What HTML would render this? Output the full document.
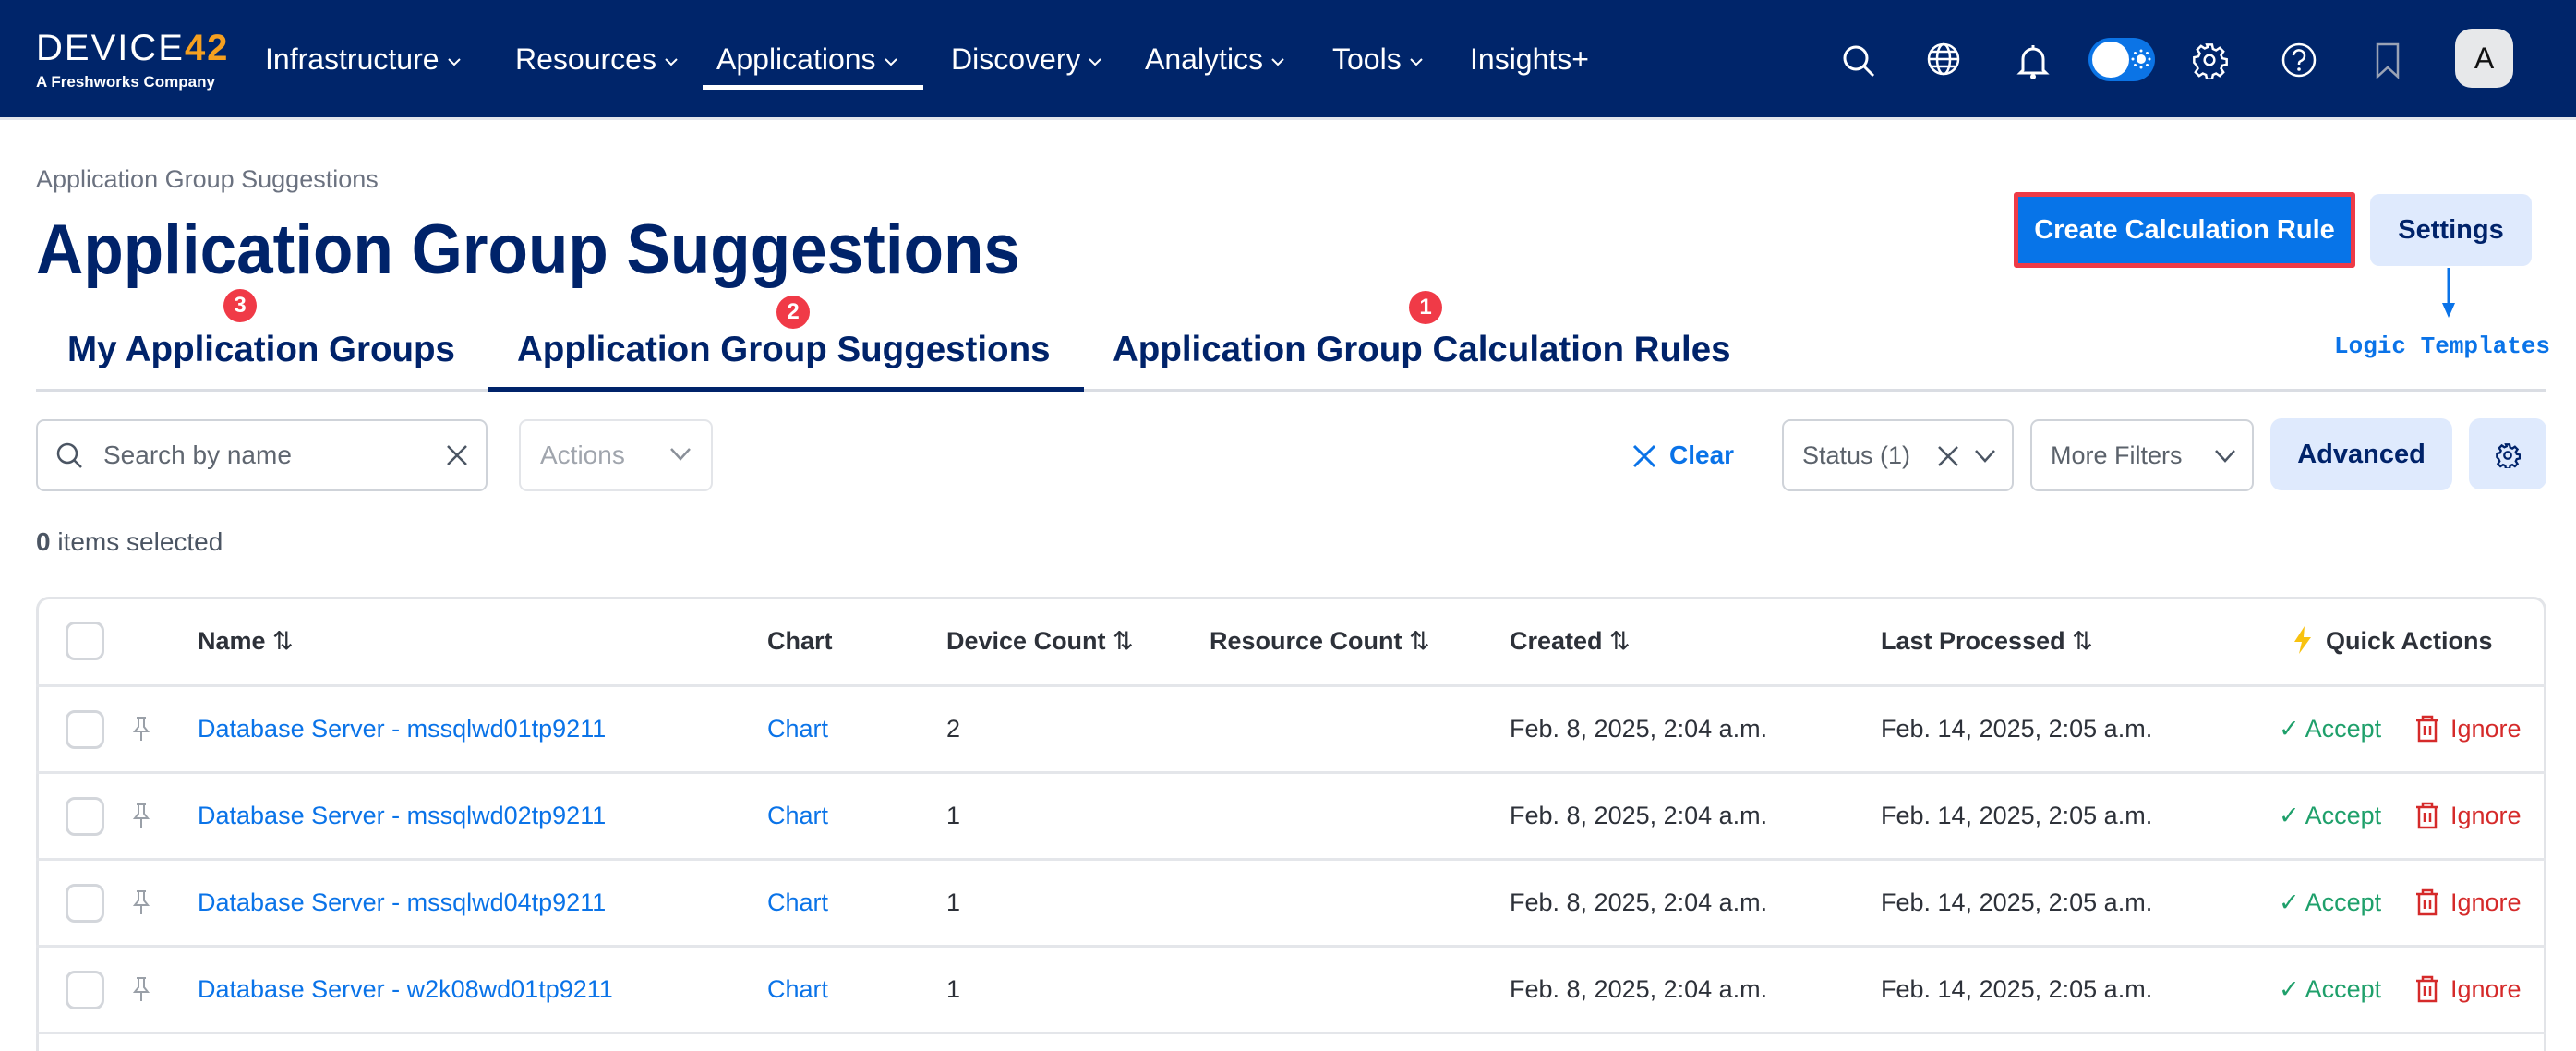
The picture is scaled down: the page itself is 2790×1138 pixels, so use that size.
<!DOCTYPE html>
<html><head><meta charset="utf-8">
<style>
*{margin:0;padding:0;box-sizing:border-box}
html,body{width:2790px;height:1138px;overflow:hidden}
body{background:#fff;font-family:"Liberation Sans",sans-serif;position:relative}
.a{position:absolute;white-space:nowrap}
.nav{position:absolute;left:0;top:0;width:2790px;height:127px;background:#00256a}
.ni{position:absolute;top:44px;font-size:32px;color:#fff;line-height:40px}
.ni svg{vertical-align:middle;margin-left:8px}
.box{position:absolute;border:2px solid #cfd3d9;border-radius:9px;background:#fff}
.cb{position:absolute;left:71px;width:42px;height:42px;border:3px solid #d3d6db;border-radius:10px}
.hd{position:absolute;font-size:27px;font-weight:bold;color:#2d3139;line-height:34px}
.td{position:absolute;font-size:27px;color:#2d3139;line-height:34px}
.lk{color:#0a73e8}
.rl{position:absolute;left:39px;width:2719px;height:3px;background:#e4e6ea}
.tab{position:absolute;top:357px;font-size:38.5px;font-weight:bold;color:#00236a;line-height:44px}
</style></head><body>
<div class="nav"></div>
<div class="a" style="left:39px;top:32px;font-size:40px;color:#fff;letter-spacing:2px;line-height:40px">DEVICE<span style="color:#f5a020;font-weight:bold">42</span></div>
<div class="a" style="left:39px;top:79px;font-size:17px;font-weight:bold;color:#fff;line-height:20px">A Freshworks Company</div>
<div class="ni" style="left:287px">Infrastructure<svg width="16" height="10"><path d="M2 2l6 6 6-6" stroke="#fff" stroke-width="2" fill="none"/></svg></div>
<div class="ni" style="left:558px">Resources<svg width="16" height="10"><path d="M2 2l6 6 6-6" stroke="#fff" stroke-width="2" fill="none"/></svg></div>
<div class="ni" style="left:776px">Applications<svg width="16" height="10"><path d="M2 2l6 6 6-6" stroke="#fff" stroke-width="2" fill="none"/></svg></div>
<div class="a" style="left:761px;top:92px;width:239px;height:5px;background:#fff"></div>
<div class="ni" style="left:1030px">Discovery<svg width="16" height="10"><path d="M2 2l6 6 6-6" stroke="#fff" stroke-width="2" fill="none"/></svg></div>
<div class="ni" style="left:1240px">Analytics<svg width="16" height="10"><path d="M2 2l6 6 6-6" stroke="#fff" stroke-width="2" fill="none"/></svg></div>
<div class="ni" style="left:1443px">Tools<svg width="16" height="10"><path d="M2 2l6 6 6-6" stroke="#fff" stroke-width="2" fill="none"/></svg></div>
<div class="ni" style="left:1592px">Insights+</div>
<svg class="a" style="left:1993px;top:46px" width="40" height="40"><circle cx="17" cy="17" r="12" stroke="#fff" stroke-width="3" fill="none"/><path d="M26 26l10 10" stroke="#fff" stroke-width="3"/></svg>
<svg class="a" style="left:2085px;top:44px" width="40" height="40"><circle cx="20" cy="20" r="16" stroke="#fff" stroke-width="2.5" fill="none"/><ellipse cx="20" cy="20" rx="7" ry="16" stroke="#fff" stroke-width="2.5" fill="none"/><path d="M4 20h32M7 12h26M7 28h26" stroke="#fff" stroke-width="2.5"/></svg>
<svg class="a" style="left:2183px;top:46px" width="38" height="42"><path d="M8 30V18a11 11 0 0 1 22 0v12l3 3H5z" stroke="#fff" stroke-width="3" fill="none"/><circle cx="19" cy="37" r="3" fill="#fff"/><path d="M19 3v4" stroke="#fff" stroke-width="3"/></svg>
<div class="a" style="left:2262px;top:41px;width:72px;height:47px;border-radius:24px;background:#0b74e6"></div>
<div class="a" style="left:2266px;top:45px;width:40px;height:39px;border-radius:20px;background:#fff"></div>
<svg class="a" style="left:2308px;top:53px" width="22" height="22"><circle cx="11" cy="11" r="5" fill="#fff"/><g fill="#fff"><circle cx="11" cy="2" r="1.5"/><circle cx="11" cy="20" r="1.5"/><circle cx="2" cy="11" r="1.5"/><circle cx="20" cy="11" r="1.5"/><circle cx="4.5" cy="4.5" r="1.5"/><circle cx="17.5" cy="17.5" r="1.5"/><circle cx="4.5" cy="17.5" r="1.5"/><circle cx="17.5" cy="4.5" r="1.5"/></g></svg>
<svg class="a" style="left:2373px;top:45px" width="40" height="40" viewBox="0 0 24 24"><path d="M10.3 2h3.4l.6 2.8 2 .9 2.4-1.6 2.4 2.4-1.6 2.4.9 2 2.8.6v3.4l-2.8.6-.9 2 1.6 2.4-2.4 2.4-2.4-1.6-2 .9-.6 2.8h-3.4l-.6-2.8-2-.9-2.4 1.6-2.4-2.4 1.6-2.4-.9-2L2 13.7v-3.4l2.8-.6.9-2-1.6-2.4 2.4-2.4 2.4 1.6 2-.9z" stroke="#fff" stroke-width="1.5" fill="none"/><circle cx="12" cy="12" r="3.2" stroke="#fff" stroke-width="1.5" fill="none"/></svg>
<svg class="a" style="left:2470px;top:45px" width="40" height="40"><circle cx="20" cy="20" r="17" stroke="#fff" stroke-width="2.5" fill="none"/><path d="M14 15a6 6 0 1 1 8 6c-2 1-2 2-2 4" stroke="#fff" stroke-width="2.5" fill="none"/><circle cx="20" cy="30" r="1.8" fill="#fff"/></svg>
<svg class="a" style="left:2570px;top:46px" width="32" height="40"><path d="M5 2h22v35l-11-10L5 37z" stroke="#9aa3b5" stroke-width="2.5" fill="none"/></svg>
<div class="a" style="left:2659px;top:31px;width:63px;height:64px;border-radius:18px;background:#e7e8ea;color:#111;font-size:32px;text-align:center;line-height:64px">A</div>
<div class="a" style="left:0;top:127px;width:2790px;height:3px;background:#e3e6ec"></div>

<div class="a" style="left:39px;top:178px;font-size:27px;color:#6b7280;line-height:32px">Application Group Suggestions</div>
<div class="a" style="left:39px;top:226px;font-size:76px;font-weight:bold;color:#00236a;line-height:90px;transform:scaleX(.935);transform-origin:left">Application Group Suggestions</div>

<div class="tab" style="left:73px">My Application Groups</div>
<div class="tab" style="left:560px">Application Group Suggestions</div>
<div class="tab" style="left:1205px">Application Group Calculation Rules</div>
<div class="a" style="left:39px;top:421px;width:2719px;height:3px;background:#dadde3"></div>
<div class="a" style="left:528px;top:419px;width:646px;height:5px;background:#00236a"></div>
<div class="a" style="left:242px;top:313px;width:36px;height:36px;border-radius:18px;background:#f03a47;color:#fff;font-weight:bold;font-size:24px;text-align:center;line-height:36px">3</div>
<div class="a" style="left:841px;top:320px;width:36px;height:36px;border-radius:18px;background:#f03a47;color:#fff;font-weight:bold;font-size:24px;text-align:center;line-height:36px">2</div>
<div class="a" style="left:1526px;top:315px;width:36px;height:36px;border-radius:18px;background:#f03a47;color:#fff;font-weight:bold;font-size:24px;text-align:center;line-height:36px">1</div>

<div class="a" style="left:2181px;top:208px;width:370px;height:82px;background:#0774e8;border:5px solid #ee3b47;border-radius:3px;color:#fff;font-size:29px;font-weight:bold;text-align:center;line-height:72px">Create Calculation Rule</div>
<div class="a" style="left:2567px;top:210px;width:175px;height:78px;background:#dfeafd;border-radius:10px;color:#00236a;font-size:29px;font-weight:bold;text-align:center;line-height:78px">Settings</div>
<svg class="a" style="left:2642px;top:290px" width="20" height="56"><path d="M10 0v40" stroke="#0a73e8" stroke-width="3"/><path d="M3 38l7 16 7-16z" fill="#0a73e8"/></svg>
<div class="a" style="left:2528px;top:360px;font-family:'Liberation Mono',monospace;font-weight:bold;font-size:26px;color:#0a73e8;line-height:30px">Logic Templates</div>

<div class="box" style="left:39px;top:454px;width:489px;height:78px"></div>
<svg class="a" style="left:60px;top:478px" width="30" height="32"><circle cx="13" cy="13" r="10" stroke="#4b5563" stroke-width="2.5" fill="none"/><path d="M20 20l8 8" stroke="#4b5563" stroke-width="2.5"/></svg>
<div class="a" style="left:112px;top:477px;font-size:28px;color:#5f6670;line-height:32px">Search by name</div>
<svg class="a" style="left:483px;top:481px" width="24" height="24"><path d="M2 2l20 20M22 2L2 22" stroke="#4b5563" stroke-width="2.5"/></svg>
<div class="box" style="left:562px;top:454px;width:210px;height:78px;border-color:#e3e5e9"></div>
<div class="a" style="left:585px;top:477px;font-size:28px;color:#a0a5ad;line-height:32px">Actions</div>
<svg class="a" style="left:725px;top:484px" width="24" height="16"><path d="M2 2l10 11 10-11" stroke="#8a9099" stroke-width="2.5" fill="none"/></svg>

<svg class="a" style="left:1768px;top:481px" width="26" height="26"><path d="M2 2l22 22M24 2L2 24" stroke="#0a73e8" stroke-width="3"/></svg>
<div class="a" style="left:1808px;top:477px;font-size:28px;font-weight:bold;color:#0a73e8;line-height:32px">Clear</div>
<div class="box" style="left:1930px;top:454px;width:251px;height:78px"></div>
<div class="a" style="left:1952px;top:477px;font-size:27px;color:#5b626b;line-height:32px">Status (1)</div>
<svg class="a" style="left:2098px;top:482px" width="24" height="24"><path d="M2 2l20 20M22 2L2 22" stroke="#4b5563" stroke-width="2.5"/></svg>
<svg class="a" style="left:2138px;top:486px" width="24" height="16"><path d="M2 2l10 11 10-11" stroke="#4b5563" stroke-width="2.5" fill="none"/></svg>
<div class="box" style="left:2199px;top:454px;width:242px;height:78px"></div>
<div class="a" style="left:2221px;top:477px;font-size:27px;color:#5b626b;line-height:32px">More Filters</div>
<svg class="a" style="left:2398px;top:486px" width="24" height="16"><path d="M2 2l10 11 10-11" stroke="#4b5563" stroke-width="2.5" fill="none"/></svg>
<div class="a" style="left:2459px;top:453px;width:197px;height:78px;background:#dfeafd;border-radius:12px;color:#00236a;font-size:29px;font-weight:bold;text-align:center;line-height:78px">Advanced</div>
<div class="a" style="left:2674px;top:453px;width:84px;height:77px;background:#dfeafd;border-radius:12px"></div>
<svg class="a" style="left:2702px;top:479px" width="28" height="28" viewBox="0 0 24 24"><path d="M10.3 2h3.4l.6 2.8 2 .9 2.4-1.6 2.4 2.4-1.6 2.4.9 2 2.8.6v3.4l-2.8.6-.9 2 1.6 2.4-2.4 2.4-2.4-1.6-2 .9-.6 2.8h-3.4l-.6-2.8-2-.9-2.4 1.6-2.4-2.4 1.6-2.4-.9-2L2 13.7v-3.4l2.8-.6.9-2-1.6-2.4 2.4-2.4 2.4 1.6 2-.9z" stroke="#00236a" stroke-width="2" fill="none"/><circle cx="12" cy="12" r="3.2" stroke="#00236a" stroke-width="2" fill="none"/></svg>

<div class="a" style="left:39px;top:571px;font-size:28px;color:#4b5563;line-height:32px"><b>0</b> items selected</div>

<div class="a" style="left:39px;top:646px;width:2719px;height:492px;border:3px solid #e2e4e8;border-bottom:none;border-radius:14px 14px 0 0"></div>
<div class="rl" style="top:741px"></div>
<div class="rl" style="top:835px"></div>
<div class="rl" style="top:929px"></div>
<div class="rl" style="top:1023px"></div>
<div class="rl" style="top:1117px"></div>

<div class="cb" style="top:673px"></div>
<div class="hd" style="left:214px;top:677px">Name <span style="font-weight:normal">⇅</span></div>
<div class="hd" style="left:831px;top:677px">Chart</div>
<div class="hd" style="left:1025px;top:677px">Device Count <span style="font-weight:normal">⇅</span></div>
<div class="hd" style="left:1310px;top:677px">Resource Count <span style="font-weight:normal">⇅</span></div>
<div class="hd" style="left:1635px;top:677px">Created <span style="font-weight:normal">⇅</span></div>
<div class="hd" style="left:2037px;top:677px">Last Processed <span style="font-weight:normal">⇅</span></div>
<svg class="a" style="left:2482px;top:677px" width="24" height="32"><path d="M14 1L3 18h8l-3 13L21 13h-8z" fill="#f8c20f"/></svg>
<div class="hd" style="left:2519px;top:677px">Quick Actions</div>

<div class="cb" style="top:769px"></div>
<svg class="a" style="left:143px;top:775px" width="20" height="28"><path d="M5 2h10M7 2v10l-4 5h14l-4-5V2M10 17v10" stroke="#9aa0a8" stroke-width="2" fill="none"/></svg>
<div class="td lk" style="left:214px;top:772px">Database Server - mssqlwd01tp9211</div>
<div class="td lk" style="left:831px;top:772px">Chart</div>
<div class="td" style="left:1025px;top:772px">2</div>
<div class="td" style="left:1635px;top:772px">Feb. 8, 2025, 2:04 a.m.</div>
<div class="td" style="left:2037px;top:772px">Feb. 14, 2025, 2:05 a.m.</div>
<div class="td" style="left:2468px;top:772px;color:#1fa06b">✓ Accept</div>
<svg class="a" style="left:2615px;top:774px" width="28" height="30"><path d="M2 6h24M9 6V2h10v4M5 6v22h18V6M11 12v10M17 12v10" stroke="#d52a2a" stroke-width="2.5" fill="none"/></svg>
<div class="td" style="left:2654px;top:772px;color:#d52a2a">Ignore</div>

<div class="cb" style="top:863px"></div>
<svg class="a" style="left:143px;top:869px" width="20" height="28"><path d="M5 2h10M7 2v10l-4 5h14l-4-5V2M10 17v10" stroke="#9aa0a8" stroke-width="2" fill="none"/></svg>
<div class="td lk" style="left:214px;top:866px">Database Server - mssqlwd02tp9211</div>
<div class="td lk" style="left:831px;top:866px">Chart</div>
<div class="td" style="left:1025px;top:866px">1</div>
<div class="td" style="left:1635px;top:866px">Feb. 8, 2025, 2:04 a.m.</div>
<div class="td" style="left:2037px;top:866px">Feb. 14, 2025, 2:05 a.m.</div>
<div class="td" style="left:2468px;top:866px;color:#1fa06b">✓ Accept</div>
<svg class="a" style="left:2615px;top:868px" width="28" height="30"><path d="M2 6h24M9 6V2h10v4M5 6v22h18V6M11 12v10M17 12v10" stroke="#d52a2a" stroke-width="2.5" fill="none"/></svg>
<div class="td" style="left:2654px;top:866px;color:#d52a2a">Ignore</div>

<div class="cb" style="top:957px"></div>
<svg class="a" style="left:143px;top:963px" width="20" height="28"><path d="M5 2h10M7 2v10l-4 5h14l-4-5V2M10 17v10" stroke="#9aa0a8" stroke-width="2" fill="none"/></svg>
<div class="td lk" style="left:214px;top:960px">Database Server - mssqlwd04tp9211</div>
<div class="td lk" style="left:831px;top:960px">Chart</div>
<div class="td" style="left:1025px;top:960px">1</div>
<div class="td" style="left:1635px;top:960px">Feb. 8, 2025, 2:04 a.m.</div>
<div class="td" style="left:2037px;top:960px">Feb. 14, 2025, 2:05 a.m.</div>
<div class="td" style="left:2468px;top:960px;color:#1fa06b">✓ Accept</div>
<svg class="a" style="left:2615px;top:962px" width="28" height="30"><path d="M2 6h24M9 6V2h10v4M5 6v22h18V6M11 12v10M17 12v10" stroke="#d52a2a" stroke-width="2.5" fill="none"/></svg>
<div class="td" style="left:2654px;top:960px;color:#d52a2a">Ignore</div>

<div class="cb" style="top:1051px"></div>
<svg class="a" style="left:143px;top:1057px" width="20" height="28"><path d="M5 2h10M7 2v10l-4 5h14l-4-5V2M10 17v10" stroke="#9aa0a8" stroke-width="2" fill="none"/></svg>
<div class="td lk" style="left:214px;top:1054px">Database Server - w2k08wd01tp9211</div>
<div class="td lk" style="left:831px;top:1054px">Chart</div>
<div class="td" style="left:1025px;top:1054px">1</div>
<div class="td" style="left:1635px;top:1054px">Feb. 8, 2025, 2:04 a.m.</div>
<div class="td" style="left:2037px;top:1054px">Feb. 14, 2025, 2:05 a.m.</div>
<div class="td" style="left:2468px;top:1054px;color:#1fa06b">✓ Accept</div>
<svg class="a" style="left:2615px;top:1056px" width="28" height="30"><path d="M2 6h24M9 6V2h10v4M5 6v22h18V6M11 12v10M17 12v10" stroke="#d52a2a" stroke-width="2.5" fill="none"/></svg>
<div class="td" style="left:2654px;top:1054px;color:#d52a2a">Ignore</div>
</body></html>
